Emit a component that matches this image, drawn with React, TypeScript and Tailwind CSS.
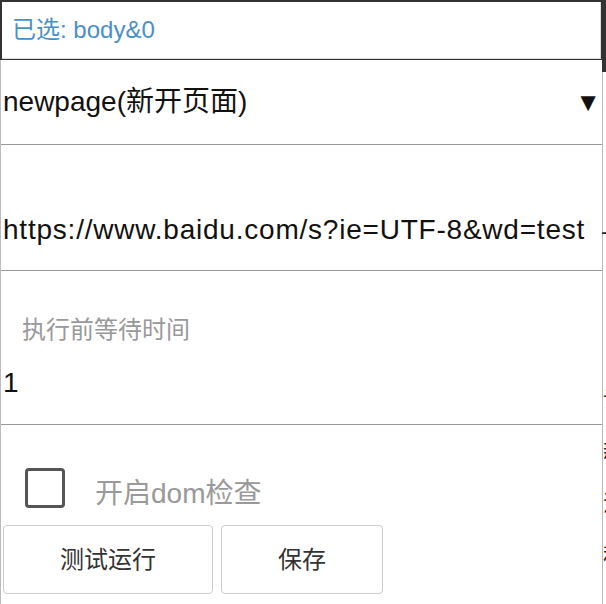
import React from "react";

const latin = { fontFamily: '"Liberation Sans", "Noto Sans CJK SC", sans-serif' };

export default function App() {
  return (
    <div className="w-[606px] h-[604px] bg-white overflow-hidden flex" style={latin}>
      {/* main panel */}
      <div className="w-[602px] flex flex-col">
        <div className="bg-[#333] pt-[2px] pl-[2px] pr-[1px] h-[60px]">
          <div className="h-[57px] bg-white border-b border-r border-[#ddd] flex items-center pl-[10px] text-[24px] leading-none text-[#4a90c8]">
            已选: body&amp;0
          </div>
        </div>
        <div className="flex-1 border-l border-[#bbb] flex flex-col">
          <div className="h-[85px] border-b border-[#999] flex items-center justify-between pl-[2px] pr-[1px] text-[28px] text-[#111]">
            <span>newpage(新开页面)</span>
            <span className="text-[26px] leading-none">▼</span>
          </div>
          <div className="h-[126px] border-b border-[#999] pt-[69px] pl-[2px] text-[28px] leading-[32px] text-[#111] tracking-[0.78px] whitespace-nowrap">
            https://www.baidu.com/s?ie=UTF-8&amp;wd=test
          </div>
          <div className="h-[154px] border-b border-[#999] flex flex-col pt-[45px]">
            <div className="pl-[21px] text-[24px] leading-[28px] text-[#999]">执行前等待时间</div>
            <div className="mt-[23px] pl-[2px] text-[28px] leading-[32px] text-[#111]">1</div>
          </div>
          <div className="h-[100px] flex items-center pl-[24px] pt-[26px]">
            <div className="w-[40px] h-[40px] border-[3px] border-[#555] rounded-[4px] shrink-0" />
            <span className="ml-[30px] text-[28px] leading-none text-[#999] mt-[12px]">开启dom检查</span>
          </div>
          <div className="flex gap-[8px] pl-[2px]">
            <button className="w-[210px] h-[69px] bg-white border border-[#ccc] rounded-[4px] text-[24px] text-[#333]">
              测试运行
            </button>
            <button className="w-[162px] h-[69px] bg-white border border-[#ccc] rounded-[4px] text-[24px] text-[#333]">
              保存
            </button>
          </div>
        </div>
      </div>
      {/* background page sliver */}
      <div className="w-[4px] flex flex-col overflow-hidden">
        <div className="h-[72px] bg-[#333] shrink-0" />
        <div className="flex-1 border-l border-[#bbb] flex flex-col text-[22px] leading-[24px] text-[#222] whitespace-nowrap">
          <span className="mt-[148px] -ml-[2px]">-</span>
          <span className="mt-[144px]">设</span>
          <span className="mt-[28px]">新</span>
          <span className="mt-[28px]">流</span>
          <span className="mt-[28px]">程</span>
        </div>
      </div>
    </div>
  );
}
